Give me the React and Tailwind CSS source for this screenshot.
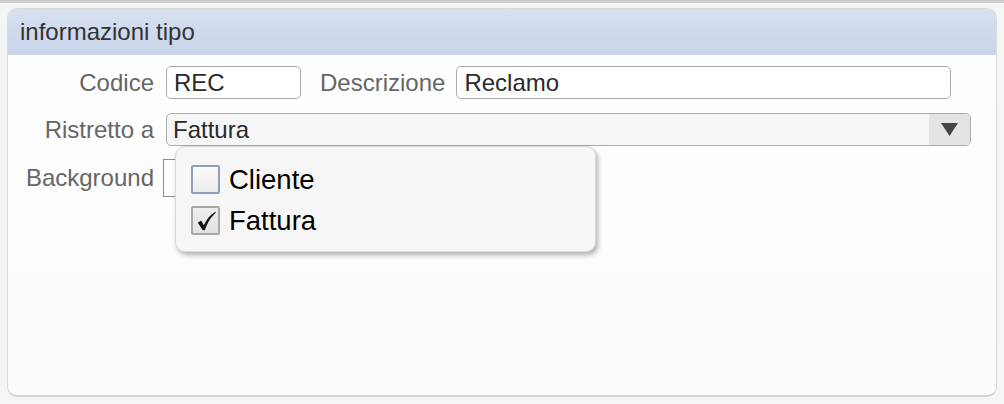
export default function App() {
  const font = { fontFamily: '"Liberation Sans", Arial, sans-serif' };
  return (
    <div
      className="w-[1004px] h-[404px] bg-[#f4f5f5] border-t-[3px] border-[#cdcdcd] pt-[5px] px-[7px] overflow-hidden"
      style={font}
    >
      <div className="relative h-[389px] rounded-[10px] border border-[#d9d9d9] border-b-2 border-b-[#d3d3d3] bg-gradient-to-b from-white to-[#fafbfb] overflow-hidden">
        <div className="h-[46px] flex items-center px-[12px] bg-gradient-to-b from-[#d8e0f0] to-[#c8d4ea] text-[#333] text-[24px]">
          informazioni tipo
        </div>

        <div className="flex flex-col pt-[11px] gap-[14px]">
          <div className="flex items-center h-[33px]">
            <div className="w-[146px] text-right text-[24px] text-[#666]">Codice</div>
            <div className="ml-[12px] w-[135px] h-[33px] rounded-[5px] border border-[#ababab] bg-white flex items-center px-[7px] text-[24px] text-[#2a2a2a]">
              REC
            </div>
            <div className="ml-[19px] text-[24px] text-[#666]">Descrizione</div>
            <div className="ml-[11px] w-[495px] h-[33px] rounded-[5px] border border-[#ababab] bg-white flex items-center px-[7px] text-[24px] text-[#2a2a2a]">
              Reclamo
            </div>
          </div>

          <div className="flex items-center h-[33px]">
            <div className="w-[146px] text-right text-[24px] text-[#666]">Ristretto a</div>
            <div className="ml-[12px] w-[805px] h-[33px] rounded-[5px] border border-[#ababab] bg-[#f6f6f6] flex items-stretch overflow-hidden">
              <div className="flex-1 flex items-center px-[6px] text-[24px] text-[#2a2a2a]">Fattura</div>
              <div className="w-[41px] bg-[#e4e4e4] flex items-center justify-center">
                <svg width="17" height="13" viewBox="0 0 17 13">
                  <polygon points="0,0 17,0 8.5,13" fill="#454545" />
                </svg>
              </div>
            </div>
          </div>

          <div className="flex items-center h-[38px] -mt-[1px]">
            <div className="w-[146px] text-right text-[24px] text-[#666]">Background</div>
            <div className="ml-[9px] w-[40px] h-[38px] border border-[#8a8a8a] bg-white" />
          </div>
        </div>

        <div className="absolute left-[167px] top-[137px] w-[421px] h-[106px] rounded-[10px] border border-[#dadada] bg-[#f6f6f6] shadow-[2px_3px_5px_rgba(0,0,0,0.3)] pl-[15px] pt-[18px] flex flex-col gap-[12px]">
          <div className="flex items-center h-[29px]">
            <div className="w-[29px] h-[29px] rounded-[2px] border-2 border-[#8d9fbc] bg-gradient-to-b from-[#fbfbfb] to-[#ebebeb]" />
            <span className="ml-[9px] text-[27.5px] text-black">Cliente</span>
          </div>
          <div className="flex items-center h-[29px]">
            <div className="w-[29px] h-[29px] rounded-[2px] border-2 border-[#a8a8a8] bg-gradient-to-b from-[#eeeeee] to-[#e2e2e2] flex items-center justify-center">
              <svg width="24" height="24" viewBox="0 0 22 22">
                <path
                  d="M3.5 12.5 L6.5 10.5 L9 15 C11.5 9.5 14.5 5.5 19.5 2.5 L20 3.5 C15.5 7.5 12.5 12 10 19.5 L8 19.5 Z"
                  fill="#111"
                />
              </svg>
            </div>
            <span className="ml-[9px] text-[27.5px] text-black">Fattura</span>
          </div>
        </div>
      </div>
    </div>
  );
}
